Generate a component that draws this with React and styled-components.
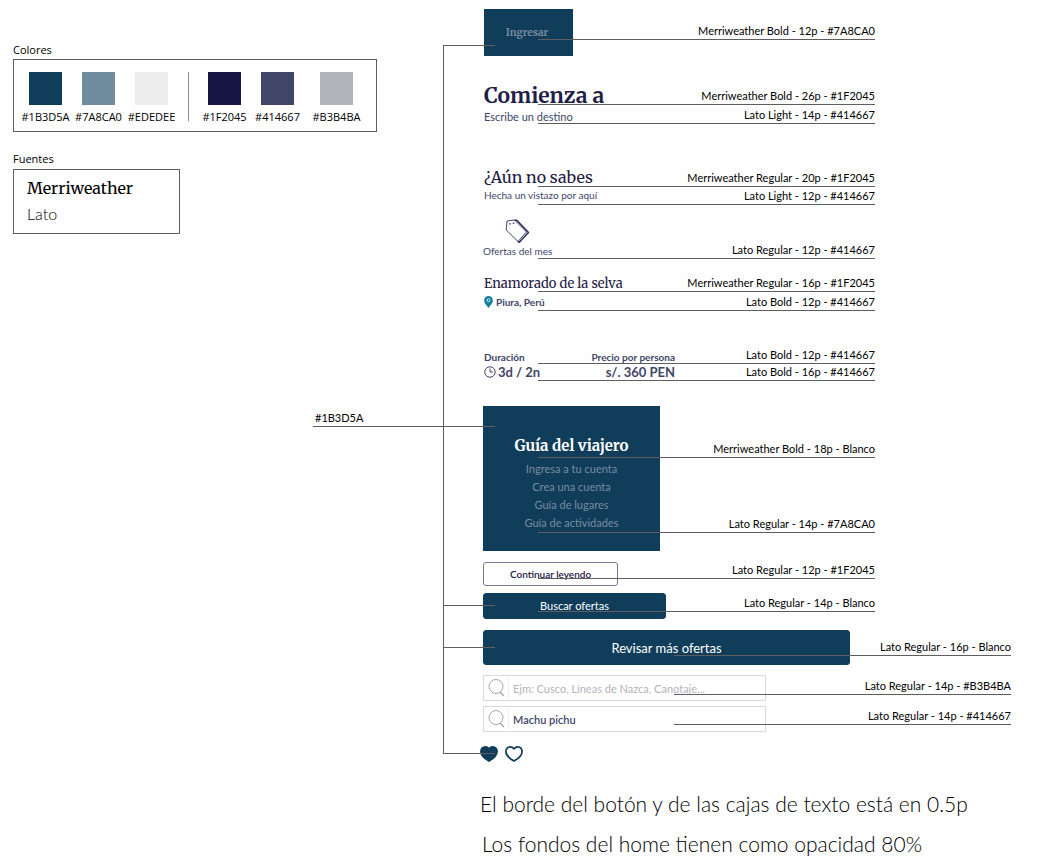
import React from 'react';
import styled, { createGlobalStyle } from 'styled-components';

const serif = 'Merriweather, "DejaVu Serif Condensed", "DejaVu Serif", serif';
const sans = 'Lato, "Liberation Sans", sans-serif';
const navy = '#0f3d5a';
const steel = '#7a8ca0';
const ink = '#1f2045';
const slate = '#414667';
const line = '#5f5d5f';

const Global = createGlobalStyle`
  *, *::before, *::after { box-sizing: border-box; }
  body { margin: 0; background: #fefefe; color: #000; font: 11px/16px ${sans}; }
  h1, h2, h3, p, ul, dl, dd, dt { margin: 0; padding: 0; font-weight: inherit; }
  ul { list-style: none; }
  svg { display: block; flex: none; }
`;

const Page = styled.main`
  display: grid;
  grid-template-columns: 430px minmax(0, 1fr);
  padding: 9px 30px 0 13px;
`;

const Aside = styled.aside`
  display: flex;
  flex-direction: column;
  align-items: flex-start;
  padding-top: 33px;
`;

const Heading = styled.h2`
  font: 11px/16px "Open Sans", sans-serif;
  margin-top: ${(p) => p.$top || 0}px;
`;

const Palette = styled.ul`
  display: flex;
  width: 364px;
  height: 73px;
  margin-top: 1px;
  padding: 12px 0 0 5px;
  border: 1px solid ${line};
`;

const Swatch = styled.li`
  display: flex;
  flex-direction: column;
  align-items: center;
  gap: 4px;
  width: 53px;
  font: 500 11px/16px "Open Sans", sans-serif;

  &::before {
    content: '';
    width: 33px;
    height: 33px;
    background: ${(p) => p.$color};
  }
`;

const Divider = styled.li`
  width: 1px;
  height: 49px;
  margin: 0 9px 0 10px;
  background: #8b8b92;
`;

const Spacer = styled.li`
  width: 6px;
`;

const Fonts = styled.div`
  width: 167px;
  height: 65px;
  margin-top: 2px;
  padding: 5px 13px;
  border: 1px solid ${line};
`;

const FontName = styled.p`
  font: ${(p) => p.$weight} 16px/26px ${(p) => p.$family};
`;

const ColorTag = styled.p`
  align-self: flex-end;
  width: 130px;
  margin-top: 176px;
  padding-left: 2px;
  border-bottom: 1px solid ${line};
`;

const Board = styled.div`
  display: grid;

  > * { grid-area: 1 / 1; }
`;

const Rail = styled.div`
  z-index: 2;
  align-self: start;
  width: 52px;
  margin-top: 36px;
  border-left: 1px solid ${line};
  border-top: 1px solid ${line};
  pointer-events: none;
`;

const Branch = styled.div`
  height: ${(p) => p.$drop}px;
  border-bottom: 1px solid ${line};
`;

const Specimens = styled.div`
  display: flex;
  flex-direction: column;
  padding-left: 40px;
`;

const Section = styled.section`
  display: grid;
  margin-top: ${(p) => p.$top || 0}px;

  > * { grid-area: 1 / 1; }
`;

const Sample = styled.div`
  justify-self: start;
  align-self: start;
  padding: ${(p) => p.$pad || '0 0 0 1px'};
`;

const Notes = styled.div`
  z-index: 1;
  display: flex;
  flex-direction: column;
  align-self: start;
  gap: ${(p) => p.$gap || 0}px;
  margin: ${(p) => p.$top || 0}px ${(p) => (p.$wide ? 0 : 136)}px 0 ${(p) => (p.$wide ? 191 : 55)}px;
  pointer-events: none;
`;

const Note = styled.p`
  border-bottom: 1px solid ${line};
  text-align: right;
`;

const Login = styled.button`
  width: 89px;
  height: 47px;
  padding: 0 3px 0 0;
  border: 0;
  background: ${navy};
  color: ${steel};
  font: 700 10px/16px ${serif};
`;

const Title = styled.h2`
  color: ${ink};
  font-family: ${serif};
  font-size: ${(p) => p.$size}px;
  line-height: ${(p) => p.$line}px;
  font-weight: ${(p) => (p.$bold ? 700 : 400)};
`;

const Caption = styled.p`
  color: ${slate};
  font-size: ${(p) => p.$size}px;
  line-height: ${(p) => p.$line}px;
`;

const TagBlock = styled.div`
  display: flex;
  flex-direction: column;
  align-items: center;
  padding-top: 1px;
`;

const Place = styled.p`
  display: flex;
  align-items: center;
  gap: 3px;
  color: ${slate};
  font: 700 10px/18px ${sans};
`;

const Facts = styled.dl`
  display: flex;
  justify-content: space-between;
  width: 191px;
  color: ${slate};
  font-weight: 700;
`;

const Fact = styled.div`
  text-align: ${(p) => p.$align || 'left'};

  dt { font-size: 10px; line-height: 14px; }
  dd { display: flex; align-items: center; justify-content: flex-end; gap: 2px; font-size: 13px; line-height: 16px; }
`;

const Guide = styled.nav`
  width: 177px;
  padding: 28px 0 19px;
  background: ${navy};
  text-align: center;

  h2 { margin-bottom: 2px; color: #fff; font: 700 15px/24px ${serif}; }
  a { color: ${steel}; font-size: 11px; line-height: 18px; text-decoration: none; display: block; }
`;

const Button = styled.button`
  width: ${(p) => p.$width}px;
  height: ${(p) => p.$height}px;
  padding: 0;
  border: 1px solid ${(p) => (p.$outline ? '#7d7795' : navy)};
  border-radius: 3px;
  background: ${(p) => (p.$outline ? '#fff' : navy)};
  color: ${(p) => (p.$outline ? ink : '#fff')};
  font: ${(p) => (p.$outline ? 600 : 400)} ${(p) => p.$size}px/16px ${sans};
`;

const SearchBox = styled.label`
  display: flex;
  align-items: center;
  width: 283px;
  height: 26px;
  padding: 1px 4px;
  border: 1px solid #d9d9db;
  background: #fff;

  input {
    flex: 1;
    min-width: 0;
    height: 22px;
    margin-left: 3px;
    padding: 0 4px;
    border: 0;
    border-left: 1px solid #f0f0f1;
    background: none;
    outline: none;
    color: ${slate};
    font: 600 11px/16px ${sans};
  }
  input::placeholder { color: #b3b4ba; opacity: 1; font-weight: 400; }
`;

const Hearts = styled.div`
  display: flex;
  gap: 7px;
  margin-left: -3px;
`;

const HeartButton = styled.button`
  padding: 0;
  border: 0;
  background: none;
`;

const Remarks = styled.div`
  margin: 22px 0 0 -3px;
  font-size: 21px;
  line-height: 40px;
  font-weight: 300;
  white-space: nowrap;

  p + p { padding-left: 2px; }
`;

const TagIcon = () => (
  <svg width="25" height="25" viewBox="0 0 25 25" fill="none" stroke="#2a2c5c" strokeLinejoin="round">
    <path d="M2 2 9.500 1 21.500 13 13 22.500 1.200 11Z" strokeWidth="0.900" />
    <path d="M9.500 1 12 1.500 23.500 13.500 14.300 23.300 13 22.500" strokeWidth="1.500" />
    <path d="M5 4.200V5.600M8.500 3.600V4.800" strokeWidth="1.600" />
  </svg>
);

const PinIcon = () => (
  <svg width="9" height="12" viewBox="0 0 9 12">
    <path d="M4.5 0A4.4 4.4 0 0 0 .1 4.4C.1 7 3 9.6 4.5 12 6 9.6 8.9 7 8.9 4.4A4.4 4.4 0 0 0 4.5 0Z" fill="#137f9c" />
    <circle cx="4.5" cy="4.2" r="1.5" fill="none" stroke="#d5edf2" />
  </svg>
);

const ClockIcon = () => (
  <svg width="12" height="12" viewBox="0 0 12 12" fill="none" stroke={slate}>
    <circle cx="6" cy="6" r="5.2" />
    <path d="M6 2.5V6H9" />
  </svg>
);

const SearchIcon = () => (
  <svg width="17" height="18" viewBox="0 0 17 18" fill="none" stroke="#a5a6ad">
    <circle cx="8" cy="7.5" r="7" />
    <path d="M12 13 16 17" strokeWidth="1.5" />
  </svg>
);

const HeartIcon = ({ filled }) => (
  <svg width="18" height="16" viewBox="0 0 18 16" fill={filled ? navy : 'none'} stroke={navy} strokeWidth="1.7">
    <path d="M9 2.800C7.800 1.300 6.500.9 5.200.9 2.800.9.9 2.800.9 5.400.9 9 4.400 12.400 9 15.100 13.600 12.400 17.100 9 17.100 5.400 17.100 2.800 15.200.9 12.800.9 11.500.9 10.200 1.300 9 2.800Z" />
  </svg>
);

export default function App() {
  return (
    <>
      <Global />
      <Page>
        <Aside>
          <Heading>Colores</Heading>
          <Palette>
            <Swatch $color="#0f3d5a">#1B3D5A</Swatch>
            <Swatch $color="#708b9d">#7A8CA0</Swatch>
            <Swatch $color="#ededed">#EDEDEE</Swatch>
            <Divider />
            <Swatch $color="#161743">#1F2045</Swatch>
            <Swatch $color="#3f4668">#414667</Swatch>
            <Spacer />
            <Swatch $color="#b3b4b9">#B3B4BA</Swatch>
          </Palette>
          <Heading $top={19}>Fuentes</Heading>
          <Fonts>
            <FontName $weight={400} $family={serif}>Merriweather</FontName>
            <FontName $weight={300} $family={sans}>Lato</FontName>
          </Fonts>
          <ColorTag>#1B3D5A</ColorTag>
        </Aside>

        <Board>
          <Rail>
            <Branch $drop={381} />
            <Branch $drop={179} />
            <Branch $drop={42} />
            <Branch $drop={106} />
          </Rail>

          <Specimens>
            <Section>
              <Sample><Login type="button">Ingresar</Login></Sample>
              <Notes $top={14}><Note>Merriweather Bold - 12p - #7A8CA0</Note></Notes>
            </Section>

            <Section $top={27}>
              <Sample>
                <Title $size={21} $line={26} $bold>Comienza a</Title>
                <Caption $size={11} $line={16}>Escribe un destino</Caption>
              </Sample>
              <Notes $top={5} $gap={2}>
                <Note>Merriweather Bold - 26p - #1F2045</Note>
                <Note>Lato Light - 14p - #414667</Note>
              </Notes>
            </Section>

            <Section $top={41}>
              <Sample>
                <Title $size={16} $line={22}>¿Aún no sabes</Title>
                <Caption $size={10} $line={14}>Hecha un vistazo por aquí</Caption>
              </Sample>
              <Notes $top={4} $gap={1}>
                <Note>Merriweather Regular - 20p - #1F2045</Note>
                <Note>Lato Light - 12p - #414667</Note>
              </Notes>
            </Section>

            <Section $top={13}>
              <Sample $pad="0">
                <TagBlock>
                  <TagIcon />
                  <Caption $size={10} $line={14}>Ofertas del mes</Caption>
                </TagBlock>
              </Sample>
              <Notes $top={24}><Note>Lato Regular - 12p - #414667</Note></Notes>
            </Section>

            <Section $top={16}>
              <Sample>
                <Title $size={13} $line={18}>Enamorado de la selva</Title>
                <Place><PinIcon />Piura, Perú</Place>
              </Sample>
              <Notes $gap={2}>
                <Note>Merriweather Regular - 16p - #1F2045</Note>
                <Note>Lato Bold - 12p - #414667</Note>
              </Notes>
            </Section>

            <Section $top={36}>
              <Sample $pad="3px 0 0 1px">
                <Facts>
                  <Fact><dt>Duración</dt><dd><ClockIcon />3d / 2n</dd></Fact>
                  <Fact $align="right"><dt>Precio por persona</dt><dd>s/. 360 PEN</dd></Fact>
                </Facts>
              </Sample>
              <Notes>
                <Note>Lato Bold - 12p - #414667</Note>
                <Note>Lato Bold - 16p - #414667</Note>
              </Notes>
            </Section>

            <Section $top={25}>
              <Sample $pad="0">
                <Guide>
                  <h2>Guía del viajero</h2>
                  <a href="#ingresa">Ingresa a tu cuenta</a>
                  <a href="#crea">Crea una cuenta</a>
                  <a href="#lugares">Guía de lugares</a>
                  <a href="#actividades">Guía de actividades</a>
                </Guide>
              </Sample>
              <Notes $top={35} $gap={58}>
                <Note>Merriweather Bold - 18p - Blanco</Note>
                <Note>Lato Regular - 14p - #7A8CA0</Note>
              </Notes>
            </Section>

            <Section $top={11}>
              <Sample $pad="0"><Button type="button" $outline $width={135} $height={24} $size={10}>Continuar leyendo</Button></Sample>
              <Notes><Note>Lato Regular - 12p - #1F2045</Note></Notes>
            </Section>

            <Section $top={7}>
              <Sample $pad="0"><Button type="button" $width={183} $height={26} $size={11}>Buscar ofertas</Button></Sample>
              <Notes $top={2}><Note>Lato Regular - 14p - Blanco</Note></Notes>
            </Section>

            <Section $top={11}>
              <Sample $pad="0"><Button type="button" $width={367} $height={35} $size={13}>Revisar más ofertas</Button></Sample>
              <Notes $wide $top={9}><Note>Lato Regular - 16p - Blanco</Note></Notes>
            </Section>

            <Section $top={10}>
              <Sample $pad="0">
                <SearchBox><SearchIcon /><input type="text" aria-label="Buscar" placeholder="Ejm: Cusco, Líneas de Nazca, Canotaje..." /></SearchBox>
              </Sample>
              <Notes $wide $top={3}><Note>Lato Regular - 14p - #B3B4BA</Note></Notes>
            </Section>

            <Section $top={5}>
              <Sample $pad="0">
                <SearchBox><SearchIcon /><input type="text" aria-label="Destino" defaultValue="Machu pichu" /></SearchBox>
              </Sample>
              <Notes $wide $top={2}><Note>Lato Regular - 14p - #414667</Note></Notes>
            </Section>

            <Section $top={14}>
              <Hearts>
                <HeartButton type="button" aria-label="Quitar de favoritos"><HeartIcon filled /></HeartButton>
                <HeartButton type="button" aria-label="Agregar a favoritos"><HeartIcon /></HeartButton>
              </Hearts>
            </Section>

            <Remarks>
              <p>El borde del botón y de las cajas de texto está en 0.5p</p>
              <p>Los fondos del home tienen como opacidad 80%</p>
            </Remarks>
          </Specimens>
        </Board>
      </Page>
    </>
  );
}
